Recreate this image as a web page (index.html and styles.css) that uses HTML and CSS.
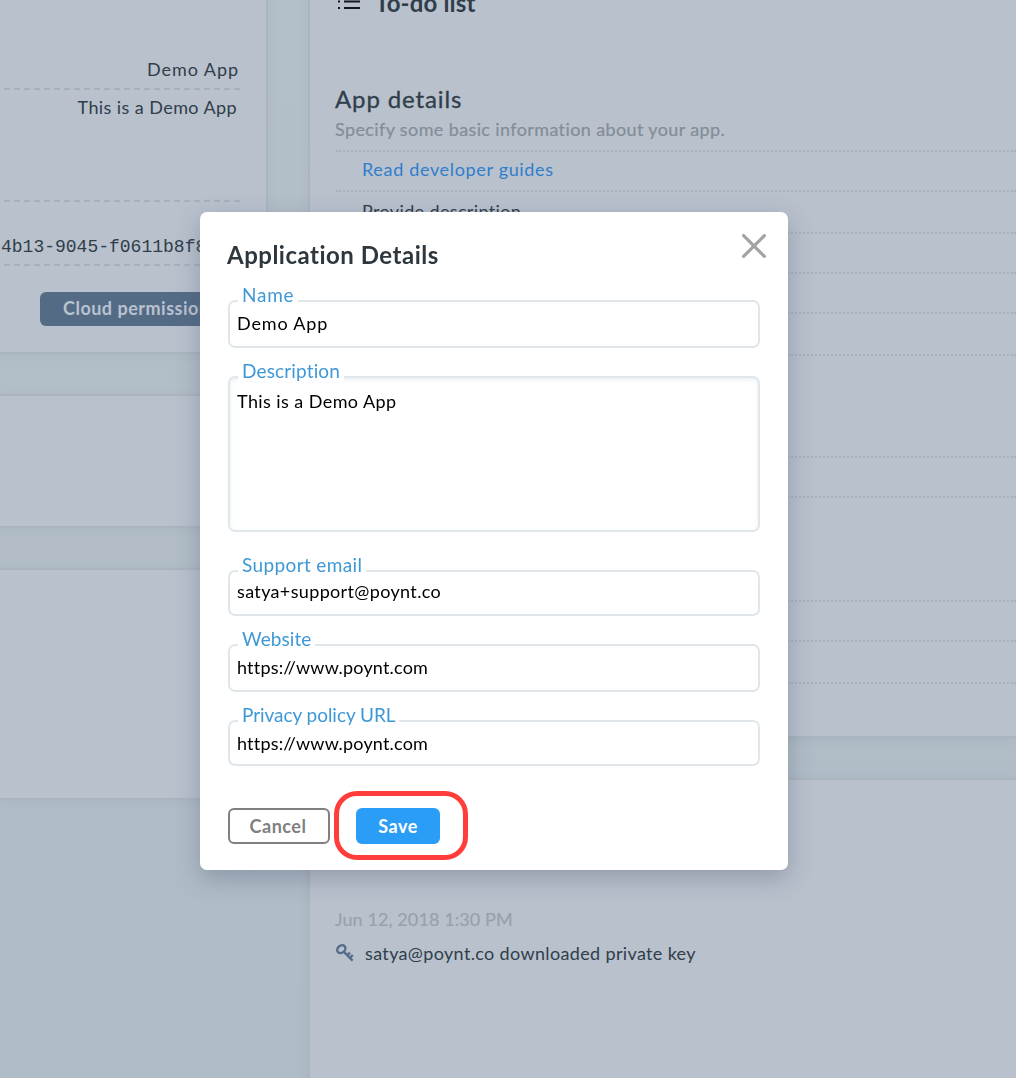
FILE: index.html
```html
<!DOCTYPE html>
<html lang="en">
<head>
<meta charset="utf-8">
<title>Application Details</title>
<link rel="stylesheet" href="styles.css">
</head>
<body>
<main class="workspace">
  <div class="column column-left">
    <section class="panel panel-app">
      <div class="info-row info-name">Demo App</div>
      <div class="info-row info-description">This is a Demo App</div>
      <div class="info-row info-id">4b13-9045-f0611b8f8</div>
      <button class="permissions" type="button">Cloud permissions</button>
    </section>
    <section class="panel panel-second"></section>
    <section class="panel panel-third"></section>
  </div>
  <div class="column column-right">
    <section class="panel panel-todo">
      <h2 class="todo-title">
        <svg class="list-icon" width="24" height="24" viewBox="0 0 24 24"><path d="M2 6h2M8 6h16M2 12.5h2M8 12.5h16M2 19h2M8 19h16" stroke="#121823" stroke-width="2"/></svg>
        To-do list
      </h2>
      <h3 class="section-title">App details</h3>
      <p class="section-note">Specify some basic information about your app.</p>
      <ul class="tasks tasks-first">
        <li class="task"><a class="task-link">Read developer guides</a></li>
        <li class="task task-tall">Provide description</li>
        <li class="task"></li>
        <li class="task"></li>
        <li class="task task-tall"></li>
      </ul>
      <ul class="tasks tasks-next">
        <li class="task"></li>
      </ul>
      <ul class="tasks tasks-last">
        <li class="task"></li>
        <li class="task task-tall"></li>
      </ul>
    </section>
    <section class="panel panel-activity">
      <time class="activity-date">Jun 12, 2018 1:30 PM</time>
      <div class="activity">
        <svg class="key-icon" width="18" height="18" viewBox="0 0 18 18" fill="none" stroke="#546d8b" stroke-width="2.4"><ellipse cx="5.3" cy="5.2" rx="4.4" ry="3.5" transform="rotate(-40 5.3 5.2)"/><path d="M7.7 7.7L16.6 16.6M11.3 11.3l2.6-2.6M13.9 13.9l2.9-2.9"/></svg>
        <span>satya@poynt.co downloaded private key</span>
      </div>
    </section>
  </div>
</main>

<div class="overlay">
  <form class="modal">
    <header class="modal-header">
      <h1 class="modal-title">Application Details</h1>
      <svg class="close" width="24" height="24" viewBox="0 0 24 24"><path d="M1.6 1.6l20.8 20.8M22.4 1.6L1.6 22.4" stroke="#a3a3a3" stroke-width="3.2" stroke-linecap="round"/></svg>
    </header>
    <div class="field field-name">
      <label class="label">Name</label>
      <input class="control" type="text" value="Demo App">
    </div>
    <div class="field field-description">
      <label class="label">Description</label>
      <textarea class="control">This is a Demo App</textarea>
    </div>
    <div class="field field-email">
      <label class="label">Support email</label>
      <input class="control" type="text" value="satya+support@poynt.co">
    </div>
    <div class="field field-website">
      <label class="label">Website</label>
      <input class="control" type="text" value="https://www.poynt.com">
    </div>
    <div class="field field-privacy">
      <label class="label">Privacy policy URL</label>
      <input class="control" type="text" value="https://www.poynt.com">
    </div>
    <footer class="actions">
      <button class="button cancel" type="button">Cancel</button>
      <div class="save-wrap">
        <button class="button save" type="button">Save</button>
        <span class="highlight"></span>
      </div>
    </footer>
  </form>
</div>
</body>
</html>
```

FILE: styles.css
```css
* { box-sizing: border-box; }

body {
  margin: 0;
  height: 1078px;
  overflow: hidden;
  background: linear-gradient(#b3bfc9, #b2bdc7 45%, #afbbc7);
  color: #2f3e4a;
  font: 18px/28px Lato, "Open Sans", sans-serif;
}

h1, h2, h3, p, ul { margin: 0; padding: 0; font-size: inherit; }
button, input, textarea { font: inherit; }

/* Page behind the dialog */
.workspace {
  display: grid;
  grid-template-columns: 268px 1fr;
  column-gap: 40px;
  height: 1078px;
  overflow: hidden;
}

.panel {
  background: #b9c1cd;
  border: 2px solid #abb5bf;
  box-shadow: 0 2px 8px rgba(90, 110, 130, .07);
}

.column-left .panel { border-left: 0; }
.column-right .panel { border-right: 0; padding-left: 26px; }

.panel-app { height: 394px; margin-top: -40px; padding: 88px 26px 0 0; }
.panel-second { height: 134px; margin-top: 40px; }
.panel-third { height: 232px; margin-top: 40px; }

.info-row {
  margin-left: -6px;
  border-bottom: 2px dashed #a8b0bb;
  text-align: right;
}
.info-name { height: 40px; line-height: 38px; padding-right: 1px; letter-spacing: .94px; }
.info-description { height: 112px; line-height: 34px; padding-right: 3px; letter-spacing: .42px; }
.info-id {
  height: 64px;
  padding: 31px 0 0 7px;
  text-align: left;
  font-family: "Liberation Mono", monospace;
}

.permissions {
  display: block;
  width: 200px;
  height: 34px;
  margin: 26px 0 0 40px;
  padding: 0 0 2px 23px;
  border: 0;
  border-radius: 6px;
  background: #546b86;
  color: #b9c2cf;
  font-weight: 700;
  line-height: 32px;
  letter-spacing: .5px;
  text-align: left;
}

.panel-todo { height: 778px; margin-top: -40px; padding-top: 27px; }
.todo-title {
  display: flex;
  gap: 15px;
  font-size: 24px;
  font-weight: 700;
  letter-spacing: .15px;
}
.section-title {
  margin-top: 66px;
  font-size: 24px;
  font-weight: 400;
  line-height: 32px;
  letter-spacing: .88px;
  -webkit-text-stroke: .3px #2f3e4a;
}
.section-note { color: #838d97; letter-spacing: .38px; -webkit-text-stroke: .2px #838d97; }
.section-title, .section-note, .activity-date { margin-left: -1px; }

.tasks { list-style: none; border-top: 2px dotted #a9b1bd; }
.tasks-first { margin-top: 7px; }
.tasks-next { margin-top: 100px; }
.tasks-last { margin-top: 102px; }
.task {
  height: 40px;
  padding-left: 26px;
  border-bottom: 2px dotted #a9b1bd;
  line-height: 34px;
  letter-spacing: .36px;
}
.task-tall { height: 42px; line-height: 38px; }
.task-link { color: #2f7ecb; letter-spacing: .67px; }

.panel-activity { height: 320px; margin-top: 40px; padding-top: 125px; }
.activity-date { display: block; color: #98a1ac; letter-spacing: .09px; -webkit-text-stroke: .2px #98a1ac; }
.activity { display: flex; align-items: center; gap: 11px; margin-top: 6px; letter-spacing: .35px; }

/* Dialog */
.overlay {
  position: fixed;
  inset: 0;
  padding: 212px 0 0 200px;
}

.modal {
  width: 588px;
  height: 658px;
  padding: 28px 28px 0;
  border-radius: 7px;
  background: #fff;
  box-shadow: 0 8px 24px rgba(70, 80, 105, .34);
}

.modal-header {
  display: flex;
  justify-content: space-between;
  height: 30px;
  margin: 0 -6px 30px -1px;
}
.modal-title {
  color: #2e373d;
  font-size: 24px;
  font-weight: 700;
  line-height: 30px;
  letter-spacing: .5px;
}
.close { margin-top: -6px; }

.field { position: relative; height: 48px; }
.field-description { height: 156px; margin-top: 28px; }
.field-email { height: 46px; margin-top: 38px; }
.field-website { margin-top: 28px; }
.field-privacy { height: 46px; margin-top: 28px; }

.label {
  position: absolute;
  top: -15px;
  left: 10px;
  padding: 0 4px;
  background: #fff;
  color: #3f98d6;
  font-size: 19px;
  line-height: 20px;
}
.field-name .label { letter-spacing: .74px; }
.field-description .label { letter-spacing: .15px; }
.field-email .label { letter-spacing: .37px; }
.field-website .label { letter-spacing: .08px; }
.field-privacy .label { letter-spacing: -.05px; }

.control {
  display: block;
  width: 100%;
  height: 100%;
  padding: 0 7px 2px;
  border: 2px solid #e0e7ec;
  border-radius: 7px;
  outline: 0;
  background: #fff;
  color: #000;
  letter-spacing: .19px;
  resize: none;
}
.field-name .control { letter-spacing: .85px; }
.field-description .control { padding-top: 9px; letter-spacing: .42px; box-shadow: inset 0 2px 4px rgba(200, 212, 225, .35); }
.field-email .control { padding-bottom: 4px; letter-spacing: .35px; }
.field-privacy .control { padding-bottom: 0; }

.actions { display: flex; gap: 26px; margin-top: 42px; }
.button {
  display: block;
  height: 36px;
  padding: 0;
  border-radius: 6px;
  font-weight: 700;
  letter-spacing: .5px;
}
.cancel { width: 102px; padding-right: 2px; border: 2px solid #808080; background: #fff; color: #808080; }
.save-wrap { position: relative; }
.save { width: 84px; border: 0; background: #2a9df6; color: #fff; }
.highlight {
  position: absolute;
  top: -17px;
  left: -22px;
  width: 134px;
  height: 69px;
  border: 5px solid #ff3e3b;
  border-radius: 23px;
}
```
